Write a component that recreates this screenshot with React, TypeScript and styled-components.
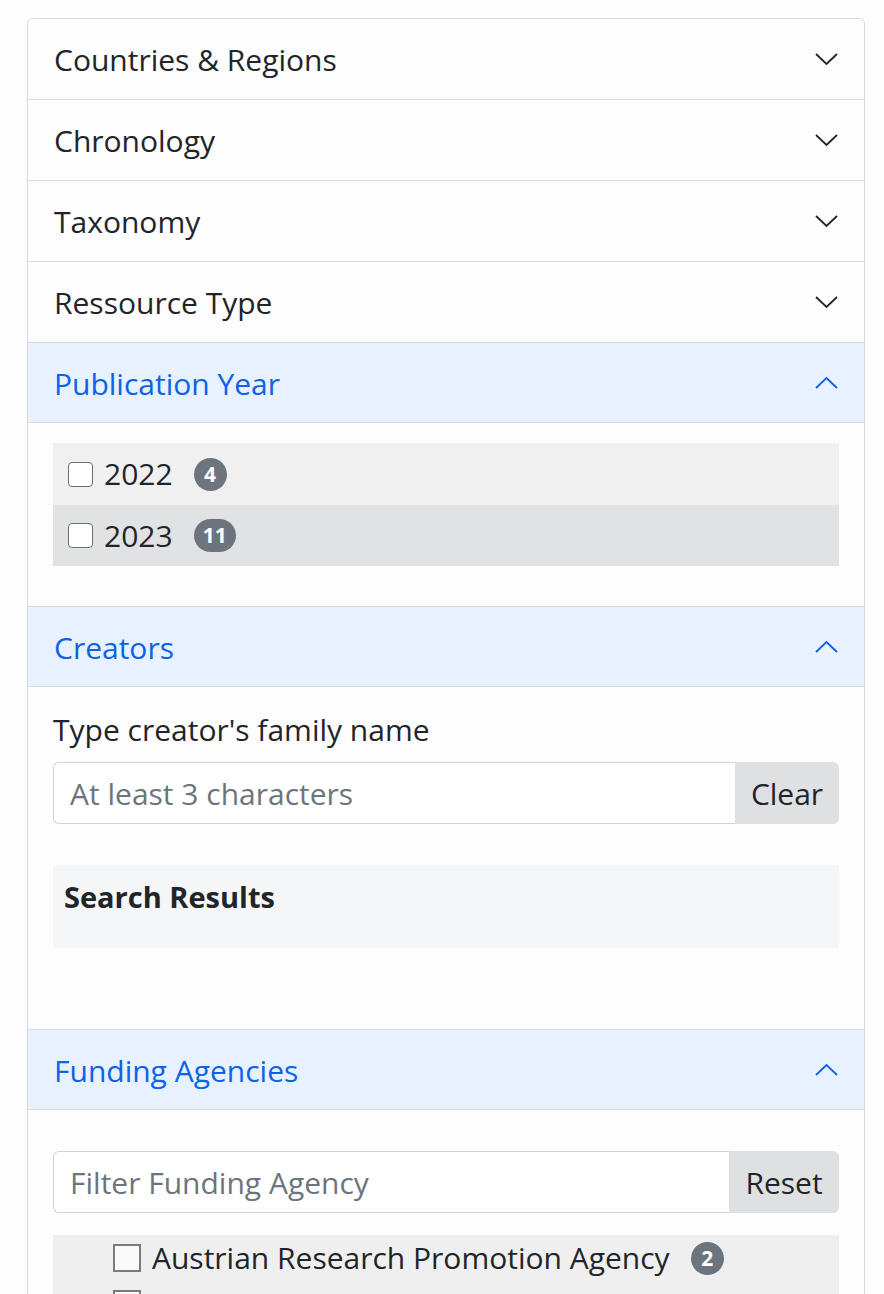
import React from "react";
import styled, { createGlobalStyle } from "styled-components";

const GlobalStyle = createGlobalStyle`
  html, body {
    margin: 0;
    padding: 0;
    background: #fdfdfd;
    font-family: "Open Sans", "Noto Sans", sans-serif;
    color: #212529;
  }
  * { box-sizing: border-box; }
`;

const Page = styled.div`
  padding: 18px 19px 0 27px;
`;

const Card = styled.div`
  width: 838px;
  border: 1px solid #dcdcdc;
  border-bottom: none;
  border-radius: 6px 6px 0 0;
  background: #fdfdfd;
  overflow: hidden;
`;

const Item = styled.section`
  & + & {
    border-top: 1px solid #dcdcdc;
  }
`;

const Header = styled.div<{ $open?: boolean }>`
  display: flex;
  align-items: center;
  justify-content: space-between;
  height: 80px;
  padding: 0 26px;
  font-size: 30px;
  color: ${(p) => (p.$open ? "#0c63e4" : "#212529")};
  background: ${(p) => (p.$open ? "#e7f1ff" : "#fdfdfd")};
  box-shadow: ${(p) => (p.$open ? "inset 0 -1px 0 #dcdcdc" : "none")};
`;

const Title = styled.span`
  line-height: 1;
  padding-top: 2px;
`;

const ChevronSvg = styled.svg<{ $open?: boolean }>`
  width: 23px;
  height: 12px;
  transform: ${(p) => (p.$open ? "rotate(180deg)" : "none")};
  flex-shrink: 0;
`;

function Chevron({ open }: { open?: boolean }) {
  return (
    <ChevronSvg $open={open} viewBox="0 0 23 12">
      <polyline
        points="1,1 11.5,11 22,1"
        fill="none"
        stroke="currentColor"
        strokeWidth="1.8"
        strokeLinejoin="miter"
      />
    </ChevronSvg>
  );
}

const Body = styled.div<{ $pad: string }>`
  padding: ${(p) => p.$pad};
  font-size: 30px;
`;

const YearList = styled.div`
  display: flex;
  flex-direction: column;
`;

const YearRow = styled.label<{ $shade: string; $h: number }>`
  display: flex;
  align-items: center;
  height: ${(p) => p.$h}px;
  padding-left: 15px;
  background: ${(p) => p.$shade};
  line-height: 1;
`;

const RoundBox = styled.span`
  width: 25px;
  height: 25px;
  border: 1.5px solid #6c6f73;
  border-radius: 4px;
  background: #fff;
  margin-right: 11px;
  flex-shrink: 0;
`;

const Badge = styled.span`
  display: inline-flex;
  align-items: center;
  justify-content: center;
  min-width: 33px;
  height: 33px;
  padding: 0 9px;
  margin-left: 21px;
  border-radius: 17px;
  background: #6c757d;
  color: #fff;
  font-size: 21px;
  font-weight: 700;
  line-height: 1;
`;

const FieldLabel = styled.div`
  line-height: 45px;
  margin: 20px 0 10px;
`;

const InputGroup = styled.div<{ $h: number }>`
  display: flex;
  height: ${(p) => p.$h}px;
`;

const TextInput = styled.input`
  flex: 1;
  min-width: 0;
  border: 1.5px solid #ced4da;
  border-right: none;
  border-radius: 6px 0 0 6px;
  background: #fff;
  padding: 0 16px;
  font-family: inherit;
  font-size: 30px;
  color: #212529;
  outline: none;
  &::placeholder {
    color: #6c757d;
  }
`;

const GroupButton = styled.button<{ $w: number }>`
  width: ${(p) => p.$w}px;
  border: none;
  border-radius: 0 6px 6px 0;
  background: #dfe0e2;
  font-family: inherit;
  font-size: 30px;
  color: #212529;
  padding: 0;
`;

const ResultsBox = styled.div`
  margin-top: 41px;
  height: 83px;
  padding: 14px 11px 0;
  background: #f5f6f8;
`;

const ResultsTitle = styled.div`
  font-size: 29px;
  font-weight: 700;
  line-height: 36px;
`;

const AgencyList = styled.div`
  margin-top: 22px;
  display: flex;
  flex-direction: column;
`;

const AgencyRow = styled.label`
  display: flex;
  align-items: center;
  height: 46px;
  padding-left: 60px;
  background: #efefef;
  line-height: 1;
`;

const SquareBox = styled.span`
  width: 28px;
  height: 28px;
  border: 2px solid #7a7a7a;
  background: #fafafa;
  margin-right: 11px;
  flex-shrink: 0;
`;

const closed = ["Countries & Regions", "Chronology", "Taxonomy", "Ressource Type"];

export default function App() {
  return (
    <>
      <GlobalStyle />
      <Page>
        <Card>
          {closed.map((t) => (
            <Item key={t}>
              <Header>
                <Title>{t}</Title>
                <Chevron />
              </Header>
            </Item>
          ))}

          <Item>
            <Header $open>
              <Title>Publication Year</Title>
              <Chevron open />
            </Header>
            <Body $pad="20px 25px 40px">
              <YearList>
                <YearRow $shade="#f0f0f0" $h={62}>
                  <RoundBox />
                  2022
                  <Badge>4</Badge>
                </YearRow>
                <YearRow $shade="#e1e2e4" $h={61}>
                  <RoundBox />
                  2023
                  <Badge>11</Badge>
                </YearRow>
              </YearList>
            </Body>
          </Item>

          <Item>
            <Header $open>
              <Title>Creators</Title>
              <Chevron open />
            </Header>
            <Body $pad="0 25px 81px">
              <FieldLabel>Type creator's family name</FieldLabel>
              <InputGroup $h={62}>
                <TextInput placeholder="At least 3 characters" />
                <GroupButton $w={104}>Clear</GroupButton>
              </InputGroup>
              <ResultsBox>
                <ResultsTitle>Search Results</ResultsTitle>
              </ResultsBox>
            </Body>
          </Item>

          <Item>
            <Header $open>
              <Title>Funding Agencies</Title>
              <Chevron open />
            </Header>
            <Body $pad="41px 25px 0">
              <InputGroup $h={62}>
                <TextInput placeholder="Filter Funding Agency" />
                <GroupButton $w={110}>Reset</GroupButton>
              </InputGroup>
              <AgencyList>
                <AgencyRow>
                  <SquareBox />
                  Austrian Research Promotion Agency
                  <Badge>2</Badge>
                </AgencyRow>
                <AgencyRow>
                  <SquareBox />
                </AgencyRow>
              </AgencyList>
            </Body>
          </Item>
        </Card>
      </Page>
    </>
  );
}
